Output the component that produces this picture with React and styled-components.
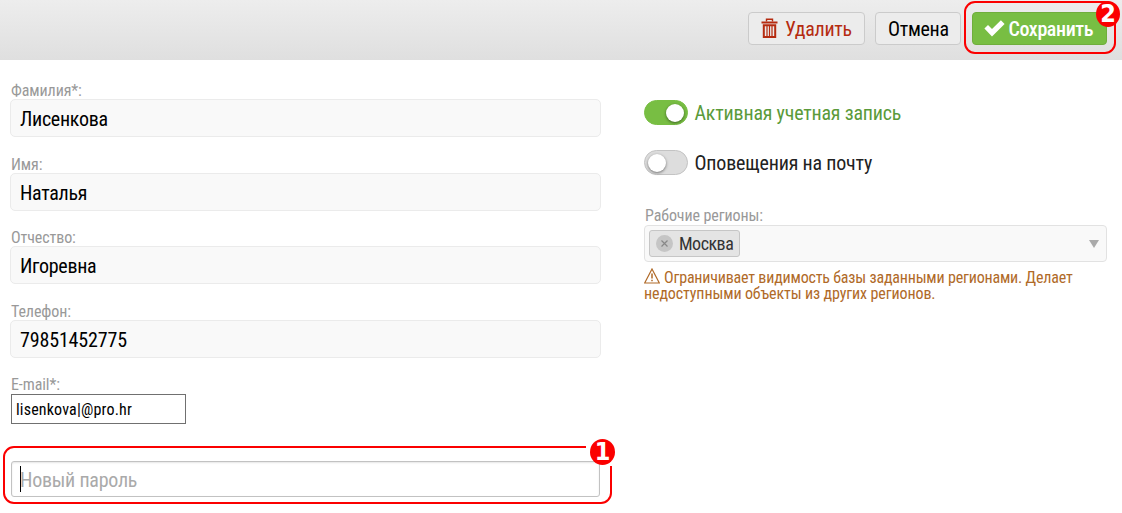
import React from 'react';
import styled, { createGlobalStyle } from 'styled-components';

const GlobalStyle = createGlobalStyle`
  *, *::before, *::after { box-sizing: border-box; }
  body {
    margin: 0;
    background: #fff;
    color: #000;
    font-family: "Roboto Condensed", Roboto, sans-serif;
    font-stretch: 75%;
    font-size: 20px;
    letter-spacing: -0.25px;
  }
`;

const Page = styled.div`
  width: 1122px;
  height: 513px;
  overflow: hidden;
`;

const Toolbar = styled.header`
  display: flex;
  justify-content: flex-end;
  gap: 10px;
  height: 60px;
  padding: 12px 15px 0 0;
  background: linear-gradient(#ededed, #dfdfdf);
`;

const Button = styled.div`
  position: relative;
  display: flex;
  align-items: center;
  gap: ${(p) => p.$gap || 0}px;
  width: ${(p) => p.$width}px;
  height: 33px;
  padding-left: ${(p) => (p.$primary ? 11 : 12)}px;
  padding-top: 1px;
  border: 1px solid ${(p) => (p.$primary ? '#6fae3c' : '#cbcbcb')};
  border-radius: 4px;
  background: ${(p) => (p.$primary ? '#78be43' : '#ececec')};
  color: ${(p) => p.$color || '#000'};
  font-weight: ${(p) => (p.$primary ? 500 : 400)};
  letter-spacing: ${(p) => (p.$primary ? -0.4 : -0.3)}px;
  line-height: 30px;
  white-space: nowrap;
  svg { flex: none; position: relative; top: -1px; }
`;

const SaveArea = styled.div`
  position: relative;
  margin-left: 1px;
`;

const Outline = styled.div`
  position: absolute;
  left: ${(p) => p.$left}px;
  top: ${(p) => p.$top}px;
  width: ${(p) => p.$width}px;
  height: ${(p) => p.$height}px;
  border: 2px solid #fb0000;
  border-radius: 11px;
`;

const CornerGap = styled.div`
  position: absolute;
  left: 576px;
  top: -6px;
  width: 27px;
  height: 23px;
  background: #fff;
`;

const Badge = styled.div`
  position: absolute;
  left: ${(p) => p.$left}px;
  top: ${(p) => p.$top}px;
  width: ${(p) => p.$width}px;
  height: 26px;
  border-radius: 50%;
  background: #fb0000;
  color: #fff;
  font: bold 25px/26px "DejaVu Sans Condensed", "DejaVu Sans", sans-serif;
  font-stretch: 75%;
  letter-spacing: 0;
  text-align: center;
`;

const Columns = styled.main`
  display: flex;
  justify-content: space-between;
  padding: 21px 15px 0 10px;
`;

const LeftColumn = styled.section`
  width: 591px;
`;

const RightColumn = styled.section`
  width: 463px;
  padding-top: 19px;
`;

const Field = styled.div`
  height: 73.6px;
`;

const Label = styled.div`
  height: 18px;
  padding-left: 1px;
  color: #999;
  font-size: 16px;
  letter-spacing: -0.1px;
  line-height: 19.2px;
`;

const Input = styled.div`
  height: 38px;
  padding-left: 9px;
  border: 1px solid #ebebeb;
  border-radius: 5px;
  background: #f9f9f9;
  letter-spacing: ${(p) => (p.$numeric ? -0.15 : -0.3)}px;
  line-height: 38px;
`;

const EmailInput = styled.div`
  width: 175px;
  height: 30px;
  margin: 1px 0 0 1px;
  padding-left: 4px;
  border: 1px solid #707070;
  font-size: 16px;
  letter-spacing: 0.17px;
  line-height: 29px;
`;

const PasswordArea = styled.div`
  position: relative;
  padding: 12px 1px 0;
`;

const PasswordInput = styled.div`
  position: relative;
  display: flex;
  align-items: center;
  width: 589px;
  height: 36px;
  padding-left: 8px;
  border: 1px solid #c2c2c2;
  border-radius: 3px;
  box-shadow: inset 0 1px 2px #e6e6e6;
  color: #aaa;
  line-height: 26px;
  padding-top: 2px;
`;

const Caret = styled.i`
  width: 1px;
  height: 26px;
  margin: -1px -1px 0 0;
  background: #000;
`;

const Switches = styled.div`
  display: grid;
  gap: 25px;
  margin-bottom: 31px;
`;

const SwitchRow = styled.div`
  display: flex;
  align-items: center;
  gap: 6.5px;
  height: 25px;
  color: ${(p) => (p.$on ? '#5a9a3a' : '#222')};
  letter-spacing: -0.2px;
`;

const Switch = styled.div`
  display: flex;
  justify-content: ${(p) => (p.$on ? 'flex-end' : 'flex-start')};
  width: 44px;
  height: 25px;
  padding: 3px;
  border: 1px solid ${(p) => (p.$on ? '#78be43' : '#c3c3c3')};
  border-radius: 13px;
  background: ${(p) => (p.$on ? '#78be43' : '#ddd')};
`;

const Knob = styled.div`
  width: 18px;
  height: 18px;
  border-radius: 50%;
  background: #fff;
  box-shadow: 0 1px 3px rgba(0, 0, 0, 0.5);
`;

const Select = styled.div`
  display: flex;
  align-items: center;
  justify-content: space-between;
  height: 37px;
  margin-top: 1px;
  padding: 0 7px 0 4px;
  border: 1px solid #e2e2e2;
  border-radius: 4px;
  background: #f9f9f9;
`;

const Tag = styled.div`
  display: flex;
  align-items: center;
  gap: 6px;
  width: 91px;
  height: 27px;
  padding-left: 6px;
  border: 1px solid #c6c6c6;
  border-radius: 3px;
  background: #e4e4e4;
  color: #333;
  font-size: 18px;
  letter-spacing: -0.5px;
`;

const Hint = styled.p`
  margin: 8px 0 0;
  color: #b06a28;
  font-size: 16px;
  line-height: 16px;
  white-space: nowrap;
  svg { vertical-align: -1px; margin: -2px 4px 0 0; }
`;

const HintLine = styled.span`
  display: block;
  height: 16px;
  letter-spacing: ${(p) => p.$spacing}px;
`;

const TrashIcon = () => (
  <svg width="17" height="21" viewBox="0 0 17 21" fill="none" stroke="#b52b10">
    <path d="M5.5 3.5V1.2h6V3.5" strokeWidth="1.4" />
    <path d="M0.5 4.5h16" strokeWidth="2" />
    <path d="M2.8 7.2v11.8h11.4V7.2z" strokeWidth="2" />
    <path d="M6 8v10M8.5 8v10M11 8v10" strokeWidth="1.2" />
  </svg>
);

const CheckIcon = () => (
  <svg width="21" height="17" viewBox="0 0 21 17" fill="#fff">
    <path d="M0.4 8.5L4 4.9L8 8.9L16.9 0.3L20.6 3.9L8 16.5Z" />
  </svg>
);

const RemoveIcon = () => (
  <svg width="17" height="17" viewBox="0 0 17 17">
    <circle cx="8.5" cy="8.5" r="8.5" fill="#c5c5c5" />
    <path d="M5.5 5.5l6 6M11.5 5.5l-6 6" stroke="#888" strokeWidth="1.2" />
  </svg>
);

const WarningIcon = () => (
  <svg width="16" height="16" viewBox="0 0 16 16" fill="none" stroke="#b06a28">
    <path d="M8 1L15.3 15H0.7Z" strokeWidth="1.2" />
    <path d="M8 5.5v5M8 11.8v1.5" strokeWidth="1.5" />
  </svg>
);

const ArrowIcon = () => (
  <svg width="10" height="8" viewBox="0 0 10 8" fill="#aaa">
    <path d="M0 0h10L5 8z" />
  </svg>
);

const fields = [
  { label: 'Фамилия*:', value: 'Лисенкова' },
  { label: 'Имя:', value: 'Наталья' },
  { label: 'Отчество:', value: 'Игоревна' },
  { label: 'Телефон:', value: '79851452775', numeric: true },
];

export default function App() {
  return (
    <Page>
      <GlobalStyle />
      <Toolbar>
        <Button $width={117} $color="#b52b10" $gap={7}><TrashIcon />Удалить</Button>
        <Button $width={86}>Отмена</Button>
        <SaveArea>
          <Button $width={135} $primary $color="#fff" $gap={3.5}><CheckIcon />Сохранить</Button>
          <Outline $left={-8} $top={-11} $width={152} $height={53} />
          <Badge $left={124} $top={-11} $width={24}>2</Badge>
        </SaveArea>
      </Toolbar>
      <Columns>
        <LeftColumn>
          {fields.map(({ label, value, numeric }) => (
            <Field key={label}>
              <Label>{label}</Label>
              <Input $numeric={numeric}>{value}</Input>
            </Field>
          ))}
          <Field>
            <Label>E-mail*:</Label>
            <EmailInput>lisenkova|@pro.hr</EmailInput>
          </Field>
          <PasswordArea>
            <Outline $left={-7} $top={-3} $width={609} $height={58} />
            <CornerGap />
            <PasswordInput><Caret />Новый пароль</PasswordInput>
            <Badge $left={580} $top={-10} $width={25}>1</Badge>
          </PasswordArea>
        </LeftColumn>
        <RightColumn>
          <Switches>
            <SwitchRow $on><Switch $on><Knob /></Switch>Активная учетная запись</SwitchRow>
            <SwitchRow><Switch><Knob /></Switch>Оповещения на почту</SwitchRow>
          </Switches>
          <Label>Рабочие регионы:</Label>
          <Select><Tag><RemoveIcon />Москва</Tag><ArrowIcon /></Select>
          <Hint>
            <HintLine $spacing={-0.19}><WarningIcon />Ограничивает видимость базы заданными регионами. Делает</HintLine>
            <HintLine $spacing={-0.12}>недоступными объекты из других регионов.</HintLine>
          </Hint>
        </RightColumn>
      </Columns>
    </Page>
  );
}
